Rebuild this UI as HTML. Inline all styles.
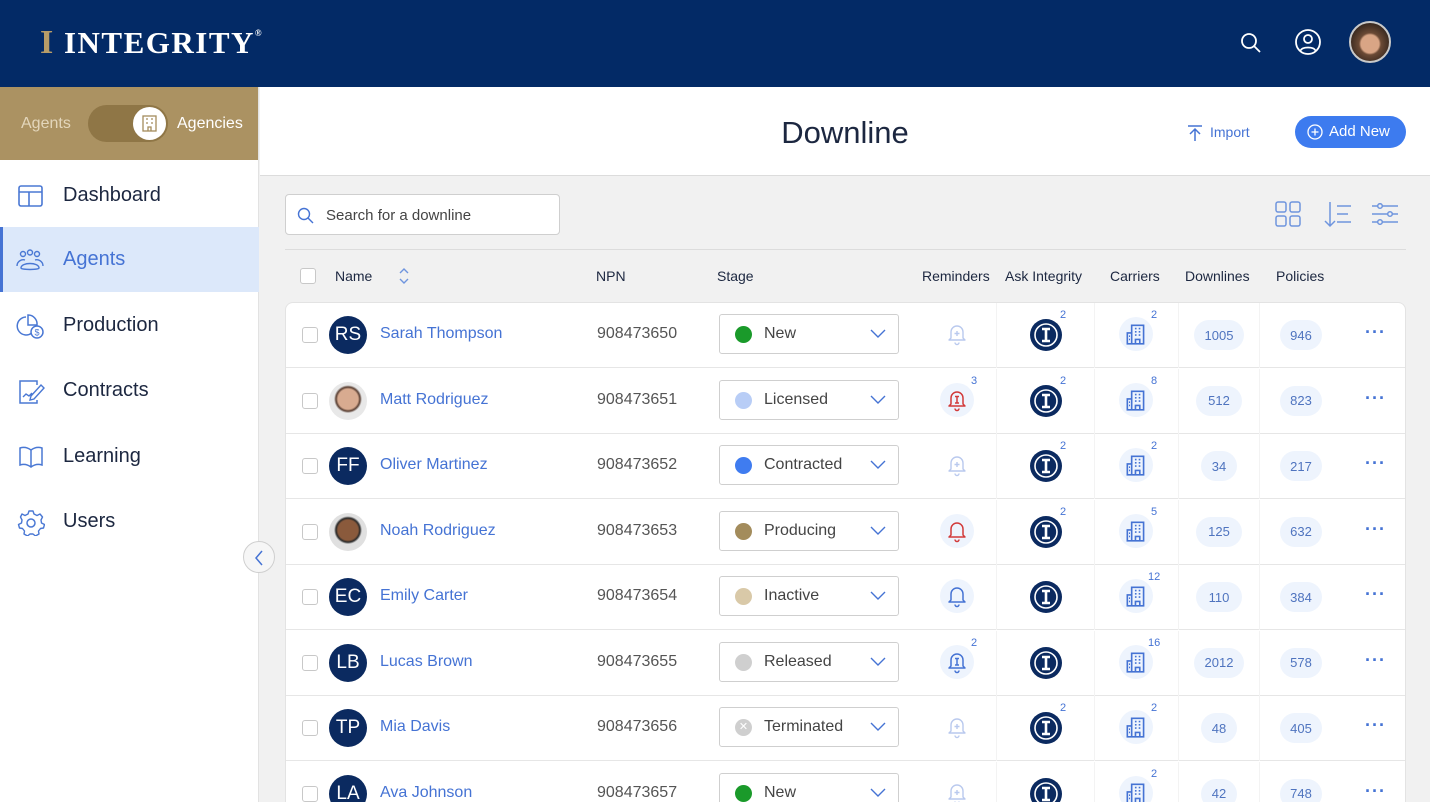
<!DOCTYPE html>
<html style="width:1430px;height:802px;overflow:hidden"><head><meta charset="utf-8">
<style>
*{box-sizing:border-box;margin:0;padding:0}
body{width:1430px;height:802px;overflow:hidden;font-family:"Liberation Sans",sans-serif;background:#f1f1f1;position:relative;color:#1c2740}
.hdr{position:absolute;left:0;top:0;width:1430px;height:87px;background:#032a66}
.logo{position:absolute;left:40px;top:24px;color:#fff;font-family:"Liberation Serif",serif;font-size:31px;letter-spacing:1.5px;font-weight:bold}
.side{position:absolute;left:0;top:87px;width:259px;height:715px;background:#fff;border-right:1px solid #e2e2e2}
.tog{height:73px;background:#ab9262;position:relative}
.nav{position:absolute;left:0;width:259px;height:65px;display:flex;align-items:center;font-size:20px;color:#1c2740}
.nav svg{position:absolute;left:17px}
.nav span{position:absolute;left:63px}
.topw{position:absolute;left:260px;top:87px;width:1170px;height:89px;background:#fff;border-bottom:1px solid #dcdcdc}
.card{position:absolute;left:285px;top:302px;width:1121px;height:500px;background:#fff;border:1px solid #e3e3e3;border-bottom:none;border-radius:8px 8px 0 0;overflow:hidden}
.row{position:absolute;left:0;width:1121px;height:65px;border-bottom:1px solid #e6e6e6}
.cb{position:absolute;left:16px;width:16px;height:16px;border:1px solid #c8c8c8;border-radius:3px;background:#fff}
.av{position:absolute;left:43px;width:38px;height:38px;border-radius:50%;background:#0b2a60;color:#fff;font-size:19px;display:flex;align-items:center;justify-content:center}
.nm{position:absolute;left:94px;font-size:16px;color:#4573d4}
.npn{position:absolute;left:311px;font-size:16px;color:#555}
.sel{position:absolute;left:433px;width:180px;height:40px;border:1px solid #cfcfcf;border-radius:3px;background:#fff}
.sel .d{position:absolute;left:15px;top:11px;width:17px;height:17px;border-radius:50%}
.sel .t{position:absolute;left:44px;top:10px;font-size:16px;color:#444}
.sel svg{position:absolute;right:12px;top:14px}
.ic{position:absolute;width:34px;height:34px;border-radius:50%;display:flex;align-items:center;justify-content:center}
.sup{position:absolute;font-size:11px;color:#4573d4}
.pill{position:absolute;height:30px;border-radius:15px;background:#eef4fd;color:#4f74bf;font-size:13px;display:flex;align-items:center;justify-content:center}
.dots{position:absolute;left:1079px;font-size:18px;color:#4573d4;letter-spacing:1px;font-weight:bold}
.vl{position:absolute;top:0;width:1px;height:65px;background:#f3f3f3}
.th{position:absolute;top:268px;font-size:14px;color:#1c2740}
</style></head><body>
<svg width="0" height="0" style="position:absolute">
<defs>
<symbol id="bell" viewBox="0 0 24 24"><path d="M6 16V10a6 6 0 0 1 12 0v6l2 2H4z M10 20.5a2 2 0 0 0 4 0" fill="none" stroke="currentColor" stroke-width="1.5" stroke-linejoin="round"/></symbol>
<symbol id="bellp" viewBox="0 0 24 24"><path d="M6 16V10a6 6 0 0 1 12 0v6l2 2H4z M10 20.5a2 2 0 0 0 4 0 M12 9v5 M9.5 11.5h5" fill="none" stroke="currentColor" stroke-width="1.4" stroke-linejoin="round"/></symbol>
<symbol id="belli" viewBox="0 0 24 24"><path d="M6 16V10a6 6 0 0 1 12 0v6l2 2H4z M10 20.5a2 2 0 0 0 4 0 M10 8.5h4 M10 15h4 M12 8.5v6.5" fill="none" stroke="currentColor" stroke-width="1.5" stroke-linejoin="round"/></symbol>
<symbol id="ai" viewBox="0 0 34 34"><circle cx="17" cy="17" r="16" fill="#0b2a60"/><circle cx="17" cy="17" r="11" fill="none" stroke="#fff" stroke-width="1.6"/><path d="M13 11h8M13 23h8M17 11v12" stroke="#fff" stroke-width="2.6" fill="none"/></symbol>
<symbol id="bld" viewBox="0 0 24 24"><path d="M8 21V4h11v17z M8 21H4V11h4 M11 7h1.5M14.5 7H16M11 10h1.5M14.5 10H16M11 13h1.5M14.5 13H16 M11.5 21v-4h4v4 M5.5 14h1M5.5 17h1" fill="none" stroke="#4573d4" stroke-width="1.5"/></symbol>
<symbol id="chev" viewBox="0 0 16 10"><path d="M1 1l7 7 7-7" fill="none" stroke="#4573d4" stroke-width="1.4"/></symbol>
</defs></svg>

<div class="hdr">
<div class="logo"><span style="color:#b79c68;font-size:34px">I</span> INTEGRITY<sup style="font-size:9px;vertical-align:top;position:relative;top:4px">®</sup></div>
<svg style="position:absolute;left:1239px;top:31px" width="24" height="24" viewBox="0 0 24 24"><circle cx="10" cy="10" r="7" fill="none" stroke="#fff" stroke-width="1.8"/><path d="M15 15l6 6" stroke="#fff" stroke-width="1.8"/></svg>
<svg style="position:absolute;left:1294px;top:28px" width="28" height="28" viewBox="0 0 28 28"><circle cx="14" cy="14" r="12" fill="none" stroke="#fff" stroke-width="1.8"/><circle cx="14" cy="11" r="4" fill="none" stroke="#fff" stroke-width="1.8"/><path d="M6.5 22.5c2-4 13-4 15 0" fill="none" stroke="#fff" stroke-width="1.8"/></svg>
<div style="position:absolute;left:1349px;top:21px;width:42px;height:42px;border-radius:50%;border:2px solid #c9c9c9;background:radial-gradient(circle at 50% 55%,#d9a585 0 9px,#6b4a35 11px,#3b2a20 20px)"></div>
</div>

<div class="side">
<div class="tog">
<span style="position:absolute;left:21px;top:28px;font-size:16px;color:#e3d6bb">Agents</span>
<div style="position:absolute;left:88px;top:18px;width:80px;height:37px;border-radius:19px;background:#8f7646"></div>
<div style="position:absolute;left:133px;top:20px;width:33px;height:33px;border-radius:50%;background:#fff"><svg style="position:absolute;left:9px;top:8px" width="15" height="17" viewBox="0 0 15 17"><rect x="1" y="1" width="13" height="15" fill="none" stroke="#a38c5c" stroke-width="1.3"/><path d="M4 4h2M9 4h2M4 8h2M9 8h2M6 16v-4h3v4" stroke="#a38c5c" stroke-width="1.3" fill="none"/></svg></div>
<span style="position:absolute;left:177px;top:28px;font-size:16px;color:#fff">Agencies</span>
</div>
<div class="nav" style="top:76px"><svg width="27" height="24" viewBox="0 0 27 24"><rect x="2" y="2" width="23" height="20" rx="2" fill="none" stroke="#4a78d4" stroke-width="1.6"/><path d="M2 8h23M12 8v14" stroke="#4a78d4" stroke-width="1.6"/></svg><span>Dashboard</span></div>
<div class="nav" style="top:140px;background:#dce8fa;border-left:3px solid #4573d4;color:#4573d4"><svg width="30" height="24" viewBox="0 0 30 24" style="left:12px"><circle cx="8" cy="6" r="2.5" fill="none" stroke="#4a78d4" stroke-width="1.4"/><circle cx="15" cy="4.5" r="2.5" fill="none" stroke="#4a78d4" stroke-width="1.4"/><circle cx="22" cy="6" r="2.5" fill="none" stroke="#4a78d4" stroke-width="1.4"/><path d="M2 18c0-5 5-7 8-6M28 18c0-5-5-7-8-6M6 20c0-6 18-6 18 0c0 2-18 2-18 0z" fill="none" stroke="#4a78d4" stroke-width="1.4"/></svg><span style="left:60px">Agents</span></div>
<div class="nav" style="top:206px"><svg width="30" height="28" viewBox="0 0 30 28" style="left:14px"><path d="M12 5a9 9 0 1 0 9 11" fill="none" stroke="#4a78d4" stroke-width="1.5"/><path d="M14 3v10h9A9 9 0 0 0 14 3z" fill="none" stroke="#4a78d4" stroke-width="1.5"/><circle cx="23" cy="20" r="6" fill="#fff" stroke="#4a78d4" stroke-width="1.5"/><text x="20.5" y="23.5" font-size="9" fill="#4a78d4" font-family="Liberation Sans">$</text></svg><span>Production</span></div>
<div class="nav" style="top:271px"><svg width="30" height="28" viewBox="0 0 30 28"><path d="M20 8V4H3v22h17v-3" fill="none" stroke="#4a78d4" stroke-width="1.5"/><path d="M6 20l3-3 3 2 3-3M14 19l10-11 3 3-10 11-4 1z" fill="none" stroke="#4a78d4" stroke-width="1.4"/></svg><span>Contracts</span></div>
<div class="nav" style="top:337px"><svg width="28" height="26" viewBox="0 0 28 26"><path d="M14 6c-4-3-8-3-11-2v17c3-1 7-1 11 2c4-3 8-3 11-2V4c-3-1-7-1-11 2zM14 6v17" fill="none" stroke="#4a78d4" stroke-width="1.5"/></svg><span>Learning</span></div>
<div class="nav" style="top:402px"><svg width="28" height="28" viewBox="0 0 28 28"><path d="M12 3h4l1 3 3 1.5 3-1.5 2.5 3-1.5 3 .5 3 3 1.5v0l-1 3.5-3 .5-2 2.5.5 3-3.5 2-2.5-2h-3l-2.5 2-3.5-2 .5-3-2-2.5-3-.5-1-3.5 3-1.5.5-3-1.5-3L5 6l3 1.5L11 6z" fill="none" stroke="#4a78d4" stroke-width="1.4" stroke-linejoin="round"/><circle cx="14" cy="15" r="4" fill="none" stroke="#4a78d4" stroke-width="1.5"/></svg><span>Users</span></div>
</div>
<div style="position:absolute;left:243px;top:541px;width:32px;height:32px;border-radius:50%;background:#f6f6f6;border:1px solid #cfcfcf"><svg style="position:absolute;left:10px;top:8px" width="10" height="16" viewBox="0 0 10 16"><path d="M8 1L2 8l6 7" fill="none" stroke="#4573d4" stroke-width="1.5"/></svg></div>

<div class="topw">
<div style="position:absolute;left:0;width:1170px;top:28px;text-align:center;font-size:31px;color:#1c2740">Downline</div>
<svg style="position:absolute;left:927px;top:37px" width="16" height="18" viewBox="0 0 16 18"><path d="M1 2h14M8 17V6M3 10l5-5 5 5" fill="none" stroke="#4573d4" stroke-width="1.5"/></svg>
<span style="position:absolute;left:950px;top:37px;font-size:14px;color:#4573d4">Import</span>
<div style="position:absolute;left:1035px;top:29px;width:111px;height:32px;border-radius:16px;background:#3d7bef;color:#fff;font-size:15px"><svg style="position:absolute;left:12px;top:8px" width="16" height="16" viewBox="0 0 16 16"><circle cx="8" cy="8" r="7" fill="none" stroke="#fff" stroke-width="1.3"/><path d="M8 4.5v7M4.5 8h7" stroke="#fff" stroke-width="1.3"/></svg><span style="position:absolute;left:34px;top:7px">Add New</span></div>
</div>

<div style="position:absolute;left:285px;top:194px;width:275px;height:41px;border:1px solid #cfcfcf;border-radius:4px;background:#fff">
<svg style="position:absolute;left:11px;top:12px" width="17" height="17" viewBox="0 0 17 17"><circle cx="7" cy="7" r="5.5" fill="none" stroke="#4573d4" stroke-width="1.4"/><path d="M11 11l5 5" stroke="#4573d4" stroke-width="1.4"/></svg>
<span style="position:absolute;left:40px;top:12px;font-size:15px;color:#444">Search for a downline</span></div>
<svg style="position:absolute;left:1275px;top:201px" width="26" height="26" viewBox="0 0 26 26"><g fill="none" stroke="#6f95de" stroke-width="1.5"><rect x="1" y="1" width="10" height="10" rx="2"/><rect x="15" y="1" width="10" height="10" rx="2"/><rect x="1" y="15" width="10" height="10" rx="2"/><rect x="15" y="15" width="10" height="10" rx="2"/></g></svg>
<svg style="position:absolute;left:1323px;top:200px" width="30" height="28" viewBox="0 0 30 28"><g fill="none" stroke="#6f95de" stroke-width="1.5"><path d="M7 2v24M2 21l5 5 5-5M14 6h14M14 14h11M14 22h14"/></g></svg>
<svg style="position:absolute;left:1371px;top:203px" width="28" height="22" viewBox="0 0 28 22"><g fill="none" stroke="#6f95de" stroke-width="1.5"><path d="M1 3h26M1 11h26M1 19h26"/><circle cx="9" cy="3" r="2.3" fill="#f1f1f1"/><circle cx="19" cy="11" r="2.3" fill="#f1f1f1"/><circle cx="9" cy="19" r="2.3" fill="#f1f1f1"/></g></svg>
<div style="position:absolute;left:285px;top:249px;width:1121px;height:1px;background:#dcdcdc"></div>

<div style="position:absolute;left:300px;top:268px;width:16px;height:16px;border:1px solid #c8c8c8;border-radius:3px;background:#fff"></div>
<div class="th" style="left:335px">Name</div>
<svg style="position:absolute;left:399px;top:267px" width="10" height="18" viewBox="0 0 10 18"><path d="M1 6l4-4 4 4M1 12l4 4 4-4" fill="none" stroke="#6f95de" stroke-width="1.4"/></svg>
<div class="th" style="left:596px">NPN</div>
<div class="th" style="left:717px">Stage</div>
<div class="th" style="left:922px">Reminders</div>
<div class="th" style="left:1005px">Ask Integrity</div>
<div class="th" style="left:1110px">Carriers</div>
<div class="th" style="left:1185px">Downlines</div>
<div class="th" style="left:1276px">Policies</div>

<div class="card">
<div class="row" style="top:0">
<div class="vl" style="left:710px"></div><div class="vl" style="left:808px"></div><div class="vl" style="left:892px"></div><div class="vl" style="left:973px"></div>
<div class="cb" style="top:24px"></div><div class="av" style="top:13px">RS</div><div class="nm" style="top:22px">Sarah Thompson</div><div class="npn" style="top:22px">908473650</div>
<div class="sel" style="top:11px"><div class="d" style="background:#1a9a2a"></div><div class="t">New</div><svg width="16" height="10"><use href="#chev"/></svg></div>
<div class="ic" style="left:654px;top:14px;color:#b9c9ee"><svg width="24" height="24"><use href="#bellp"/></svg></div>
<svg style="position:absolute;left:743px;top:15px" width="34" height="34"><use href="#ai"/></svg><div class="sup" style="left:774px;top:6px">2</div>
<div class="ic" style="left:833px;top:14px;background:#eef4fd"><svg width="26" height="26"><use href="#bld"/></svg></div><div class="sup" style="left:865px;top:6px">2</div>
<div class="pill" style="left:908px;top:17px;width:50px">1005</div><div class="pill" style="left:994px;top:17px;width:42px">946</div><div class="dots" style="top:19px">···</div>
</div>
<div class="row" style="top:65.5px">
<div class="vl" style="left:710px"></div><div class="vl" style="left:808px"></div><div class="vl" style="left:892px"></div><div class="vl" style="left:973px"></div>
<div class="cb" style="top:24px"></div><div class="av" style="top:13px;background:radial-gradient(circle at 50% 45%,#d8ab90 0 10px,#5a4034 12px,#e8e8e8 14px)"></div><div class="nm" style="top:22px">Matt Rodriguez</div><div class="npn" style="top:22px">908473651</div>
<div class="sel" style="top:11px"><div class="d" style="background:#b8cdf6"></div><div class="t">Licensed</div><svg width="16" height="10"><use href="#chev"/></svg></div>
<div class="ic" style="left:654px;top:14px;background:#eef4fd;color:#d23a3a"><svg width="24" height="24"><use href="#belli"/></svg></div><div class="sup" style="left:685px;top:6px">3</div>
<svg style="position:absolute;left:743px;top:15px" width="34" height="34"><use href="#ai"/></svg><div class="sup" style="left:774px;top:6px">2</div>
<div class="ic" style="left:833px;top:14px;background:#eef4fd"><svg width="26" height="26"><use href="#bld"/></svg></div><div class="sup" style="left:865px;top:6px">8</div>
<div class="pill" style="left:910px;top:17px;width:46px">512</div><div class="pill" style="left:994px;top:17px;width:42px">823</div><div class="dots" style="top:19px">···</div>
</div>
<div class="row" style="top:131px">
<div class="vl" style="left:710px"></div><div class="vl" style="left:808px"></div><div class="vl" style="left:892px"></div><div class="vl" style="left:973px"></div>
<div class="cb" style="top:24px"></div><div class="av" style="top:13px">FF</div><div class="nm" style="top:22px">Oliver Martinez</div><div class="npn" style="top:22px">908473652</div>
<div class="sel" style="top:11px"><div class="d" style="background:#3f7cf0"></div><div class="t">Contracted</div><svg width="16" height="10"><use href="#chev"/></svg></div>
<div class="ic" style="left:654px;top:14px;color:#b9c9ee"><svg width="24" height="24"><use href="#bellp"/></svg></div>
<svg style="position:absolute;left:743px;top:15px" width="34" height="34"><use href="#ai"/></svg><div class="sup" style="left:774px;top:6px">2</div>
<div class="ic" style="left:833px;top:14px;background:#eef4fd"><svg width="26" height="26"><use href="#bld"/></svg></div><div class="sup" style="left:865px;top:6px">2</div>
<div class="pill" style="left:915px;top:17px;width:36px">34</div><div class="pill" style="left:994px;top:17px;width:42px">217</div><div class="dots" style="top:19px">···</div>
</div>
<div class="row" style="top:196.5px">
<div class="vl" style="left:710px"></div><div class="vl" style="left:808px"></div><div class="vl" style="left:892px"></div><div class="vl" style="left:973px"></div>
<div class="cb" style="top:24px"></div><div class="av" style="top:13px;background:radial-gradient(circle at 50% 45%,#8a5a3c 0 10px,#2a2a2a 12px,#e0e0e0 14px)"></div><div class="nm" style="top:22px">Noah Rodriguez</div><div class="npn" style="top:22px">908473653</div>
<div class="sel" style="top:11px"><div class="d" style="background:#a38c5c"></div><div class="t">Producing</div><svg width="16" height="10"><use href="#chev"/></svg></div>
<div class="ic" style="left:654px;top:14px;background:#eef4fd;color:#d23a3a"><svg width="24" height="24"><use href="#bell"/></svg></div>
<svg style="position:absolute;left:743px;top:15px" width="34" height="34"><use href="#ai"/></svg><div class="sup" style="left:774px;top:6px">2</div>
<div class="ic" style="left:833px;top:14px;background:#eef4fd"><svg width="26" height="26"><use href="#bld"/></svg></div><div class="sup" style="left:865px;top:6px">5</div>
<div class="pill" style="left:910px;top:17px;width:46px">125</div><div class="pill" style="left:994px;top:17px;width:42px">632</div><div class="dots" style="top:19px">···</div>
</div>
<div class="row" style="top:262px">
<div class="vl" style="left:710px"></div><div class="vl" style="left:808px"></div><div class="vl" style="left:892px"></div><div class="vl" style="left:973px"></div>
<div class="cb" style="top:24px"></div><div class="av" style="top:13px">EC</div><div class="nm" style="top:22px">Emily Carter</div><div class="npn" style="top:22px">908473654</div>
<div class="sel" style="top:11px"><div class="d" style="background:#d9c9a8"></div><div class="t">Inactive</div><svg width="16" height="10"><use href="#chev"/></svg></div>
<div class="ic" style="left:654px;top:14px;background:#eef4fd;color:#4573d4"><svg width="24" height="24"><use href="#bell"/></svg></div>
<svg style="position:absolute;left:743px;top:15px" width="34" height="34"><use href="#ai"/></svg>
<div class="ic" style="left:833px;top:14px;background:#eef4fd"><svg width="26" height="26"><use href="#bld"/></svg></div><div class="sup" style="left:862px;top:6px">12</div>
<div class="pill" style="left:910px;top:17px;width:46px">110</div><div class="pill" style="left:994px;top:17px;width:42px">384</div><div class="dots" style="top:19px">···</div>
</div>
<div class="row" style="top:327.5px">
<div class="vl" style="left:710px"></div><div class="vl" style="left:808px"></div><div class="vl" style="left:892px"></div><div class="vl" style="left:973px"></div>
<div class="cb" style="top:24px"></div><div class="av" style="top:13px">LB</div><div class="nm" style="top:22px">Lucas Brown</div><div class="npn" style="top:22px">908473655</div>
<div class="sel" style="top:11px"><div class="d" style="background:#cfcfcf"></div><div class="t">Released</div><svg width="16" height="10"><use href="#chev"/></svg></div>
<div class="ic" style="left:654px;top:14px;background:#eef4fd;color:#4573d4"><svg width="24" height="24"><use href="#belli"/></svg></div><div class="sup" style="left:685px;top:6px">2</div>
<svg style="position:absolute;left:743px;top:15px" width="34" height="34"><use href="#ai"/></svg>
<div class="ic" style="left:833px;top:14px;background:#eef4fd"><svg width="26" height="26"><use href="#bld"/></svg></div><div class="sup" style="left:862px;top:6px">16</div>
<div class="pill" style="left:908px;top:17px;width:50px">2012</div><div class="pill" style="left:994px;top:17px;width:42px">578</div><div class="dots" style="top:19px">···</div>
</div>
<div class="row" style="top:393px">
<div class="vl" style="left:710px"></div><div class="vl" style="left:808px"></div><div class="vl" style="left:892px"></div><div class="vl" style="left:973px"></div>
<div class="cb" style="top:24px"></div><div class="av" style="top:13px">TP</div><div class="nm" style="top:22px">Mia Davis</div><div class="npn" style="top:22px">908473656</div>
<div class="sel" style="top:11px"><div class="d" style="background:#cfcfcf;color:#fff;font-size:11px;text-align:center;line-height:17px">✕</div><div class="t">Terminated</div><svg width="16" height="10"><use href="#chev"/></svg></div>
<div class="ic" style="left:654px;top:14px;color:#b9c9ee"><svg width="24" height="24"><use href="#bellp"/></svg></div>
<svg style="position:absolute;left:743px;top:15px" width="34" height="34"><use href="#ai"/></svg><div class="sup" style="left:774px;top:6px">2</div>
<div class="ic" style="left:833px;top:14px;background:#eef4fd"><svg width="26" height="26"><use href="#bld"/></svg></div><div class="sup" style="left:865px;top:6px">2</div>
<div class="pill" style="left:915px;top:17px;width:36px">48</div><div class="pill" style="left:994px;top:17px;width:42px">405</div><div class="dots" style="top:19px">···</div>
</div>
<div class="row" style="top:458.5px;border-bottom:none">
<div class="vl" style="left:710px"></div><div class="vl" style="left:808px"></div><div class="vl" style="left:892px"></div><div class="vl" style="left:973px"></div>
<div class="cb" style="top:24px"></div><div class="av" style="top:13px">LA</div><div class="nm" style="top:22px">Ava Johnson</div><div class="npn" style="top:22px">908473657</div>
<div class="sel" style="top:11px"><div class="d" style="background:#1a9a2a"></div><div class="t">New</div><svg width="16" height="10"><use href="#chev"/></svg></div>
<div class="ic" style="left:654px;top:14px;color:#b9c9ee"><svg width="24" height="24"><use href="#bellp"/></svg></div>
<svg style="position:absolute;left:743px;top:15px" width="34" height="34"><use href="#ai"/></svg>
<div class="ic" style="left:833px;top:14px;background:#eef4fd"><svg width="26" height="26"><use href="#bld"/></svg></div><div class="sup" style="left:865px;top:6px">2</div>
<div class="pill" style="left:915px;top:17px;width:36px">42</div><div class="pill" style="left:994px;top:17px;width:42px">748</div><div class="dots" style="top:19px">···</div>
</div>
</div>
</body></html>
